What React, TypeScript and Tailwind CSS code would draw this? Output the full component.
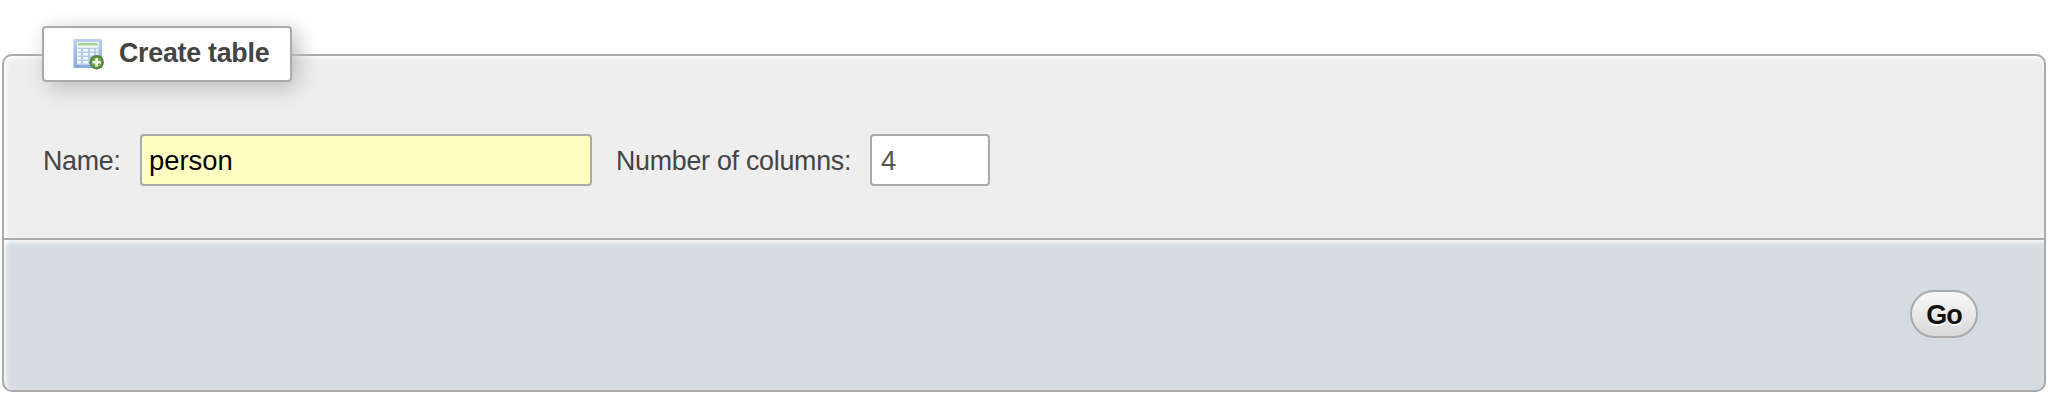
function TableAddIcon() {
  return (
    <svg className="block h-8 w-8" viewBox="0 0 32 32" fill="none">
      <defs>
        <linearGradient id="frame" x1="0" y1="0" x2="0" y2="1">
          <stop offset="0" stopColor="#b9d0f1" />
          <stop offset="1" stopColor="#86a8dd" />
        </linearGradient>
        <radialGradient id="badge" cx="0.5" cy="0.5" r="0.5">
          <stop offset="0" stopColor="#8fc063" />
          <stop offset="0.6" stopColor="#6ea545" />
          <stop offset="1" stopColor="#4a7434" />
        </radialGradient>
      </defs>
      <rect x="1.5" y="1" width="28.5" height="29" rx="1.5" fill="url(#frame)" />
      <rect x="5" y="4" width="21.5" height="22.5" fill="#e3edfa" />
      <rect x="5" y="4" width="21.5" height="5" fill="#f5f9f3" />
      <rect x="6" y="5" width="19.5" height="2.4" fill="#a5d08f" />
      <rect x="6" y="10" width="19.5" height="16" fill="#b4cbeb" />
      <path
        d="M6 11h3v2.5H6zM11 11h5v2.5h-5zM18 11h4v2.5h-4zM24 11h1.5v2.5H24zM6 15h3v2.5H6zM11 15h5v2.5h-5zM18 15h4v2.5h-4zM24 15h1.5v2.5H24zM6 19h3v2.5H6zM11 19h5v2.5h-5zM6 23h3v2.5H6zM11 23h5v2.5h-5z"
        fill="#f7faff"
      />
      <circle cx="24.7" cy="24.2" r="7.2" fill="url(#badge)" />
      <path d="M24.7 20v8.4M20.5 24.2h8.4" stroke="#eef7e6" strokeWidth="2.6" />
    </svg>
  );
}

export default function App() {
  return (
    <main className="h-[410px] w-[2048px] overflow-hidden bg-white px-0.5 pt-[54px] font-['Liberation_Sans',Arial,sans-serif] text-[26.8px] tracking-[-0.26px] text-[#444]">
      <form className="flex flex-col" onSubmit={(e) => e.preventDefault()}>
        <section className="h-[184px] rounded-t-[10px] border-2 border-b-0 border-[#aaa] bg-[#eee] pl-[38px] shadow-[inset_2px_2px_5px_#fff]">
          <h1 className="-mt-[30px] flex h-14 w-[250px] items-center rounded-[4px] border-2 border-[#aaa] bg-white pl-[28px] font-bold shadow-[6px_6px_22px_#bbb]">
            <TableAddIcon />
            <span className="-mt-0.5 ml-[15px] whitespace-nowrap">Create table</span>
          </h1>
          <div className="mt-[52px] flex h-[52px] items-center">
            <label htmlFor="name" className="w-[98px] pt-[3px] pl-px whitespace-nowrap">Name:</label>
            <input
              id="name"
              type="text"
              defaultValue="person"
              className="h-[52px] w-[452px] rounded-[4px] border-2 border-[#aaa] bg-[#ffffc4] px-[7px] pt-px text-[27.4px] tracking-normal text-black outline-none"
            />
            <label htmlFor="columns" className="ml-6 w-[254px] pt-[3px] whitespace-nowrap">Number of columns:</label>
            <input
              id="columns"
              type="text"
              defaultValue="4"
              className="h-[52px] w-[120px] rounded-[4px] border-2 border-[#aaa] bg-white px-[9px] pt-px text-[27.4px] text-[#555] outline-none"
            />
          </div>
        </section>
        <footer className="flex h-[154px] justify-end rounded-b-[10px] border-2 border-[#aaa] bg-[#d4dbe1] pt-[50px] pr-[66px] shadow-[inset_2px_2px_5px_#fff]">
          <button className="flex h-12 w-[68px] items-center justify-center rounded-[24px] border-2 border-[#aaa] bg-linear-to-b from-[#f8f8f8] to-[#d8d8d8] pt-0.5 text-[27px] font-bold tracking-[-1px] text-[#111] [text-shadow:0_2px_0_#fff]">
            Go
          </button>
        </footer>
      </form>
    </main>
  );
}
